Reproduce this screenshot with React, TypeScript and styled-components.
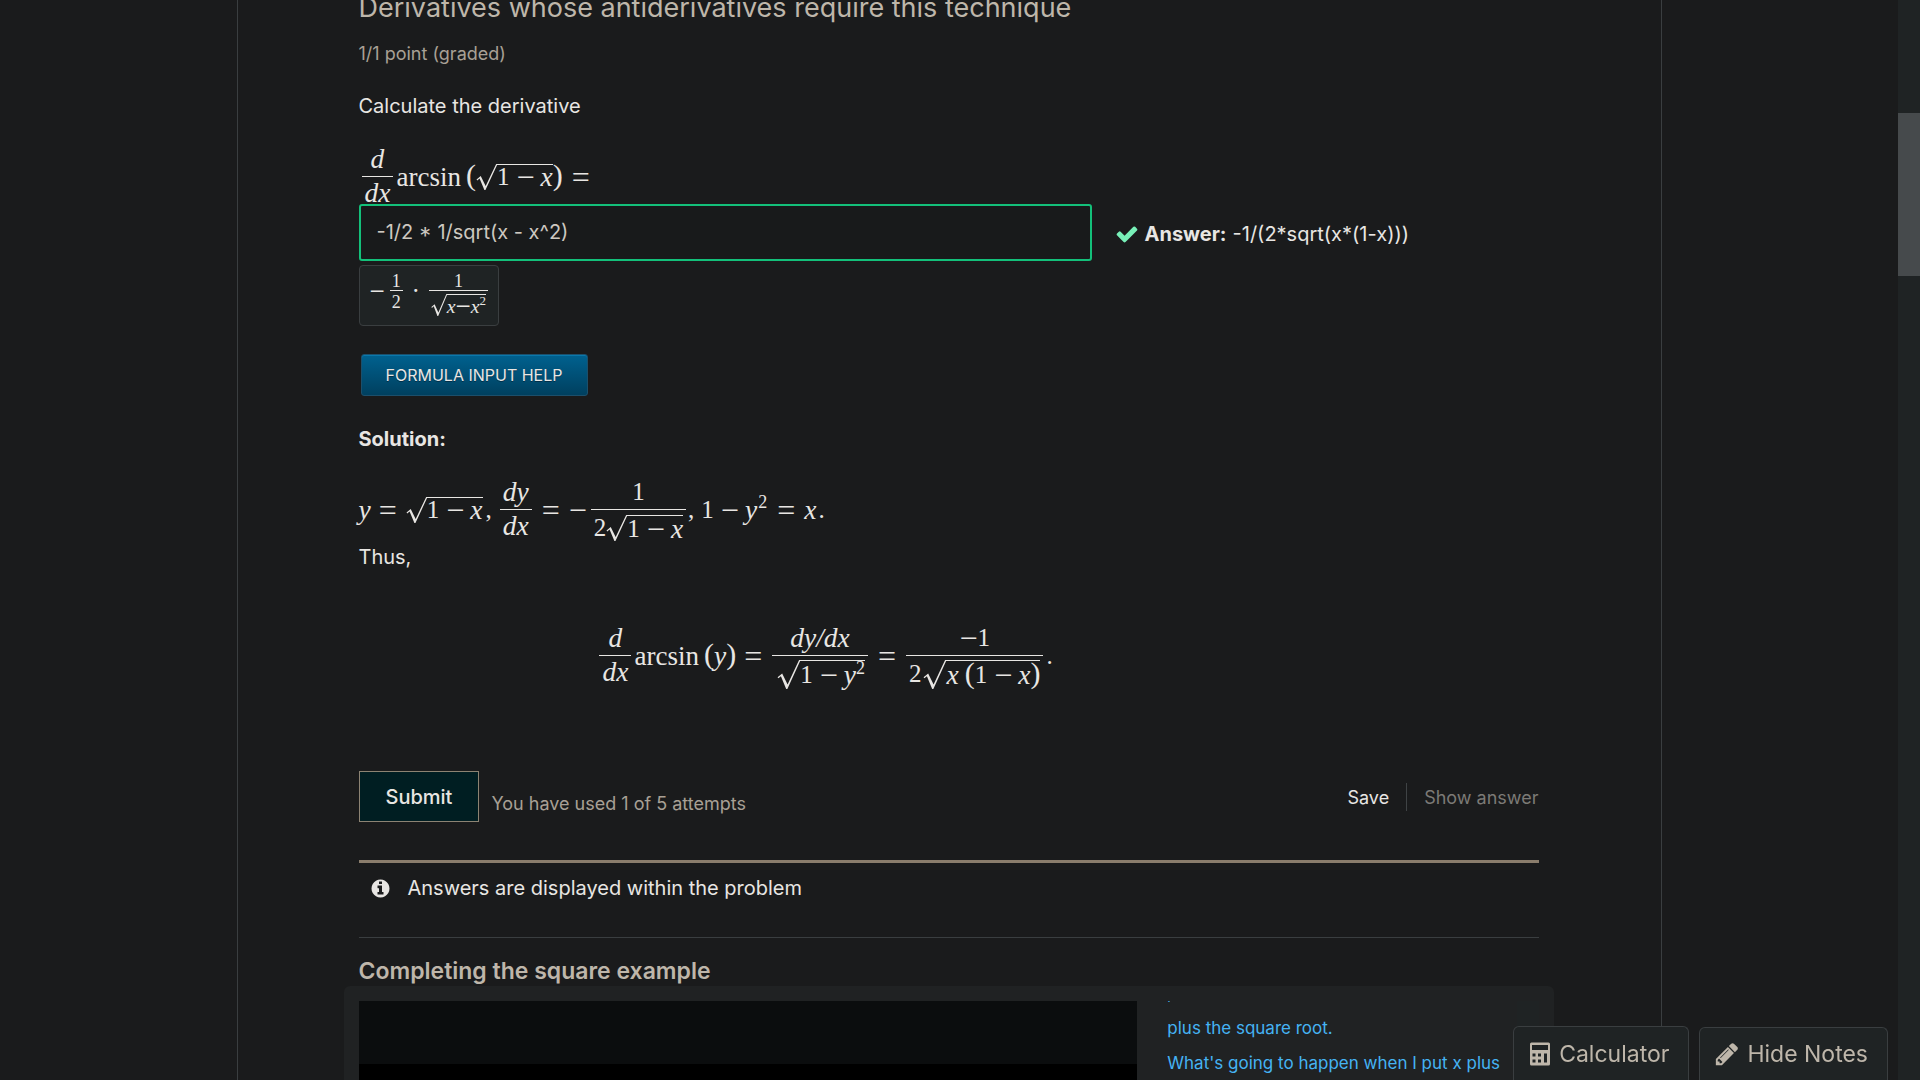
import React from "react";
import styled, { createGlobalStyle, css } from "styled-components";

const GlobalStyle = createGlobalStyle`
  *, *::before, *::after { box-sizing: border-box; }
  html, body { margin: 0; height: 100%; background: #1a1b1c; }
  body {
    overflow: hidden;
    color: #e8e6e3;
    font: 400 20px/30px Inter, "Open Sans", sans-serif;
  }
  h2, h3, p { margin: 0; }
  button, input { font: inherit; color: inherit; }
`;

/* ---------- page frame ---------- */

const Viewport = styled.div`
  display: flex;
  height: 100vh;
  overflow: hidden;
`;

const Scroller = styled.div`
  flex: 1;
  min-width: 0;
  overflow: hidden;
`;

const Track = styled.div`
  flex: none;
  width: 22px;
  padding-top: 113px;
  background: #1f2324;
`;

const Thumb = styled.div`
  height: 163px;
  background: #464a4c;
`;

const Column = styled.main`
  max-width: 1425px;
  min-height: 100%;
  margin: 0 auto;
  padding: 0 122px 0 121px;
  border: solid #3a3e40;
  border-width: 0 1px;
`;

const Problem = styled.section`
  display: flex;
  flex-direction: column;
  margin-top: -8px;
`;

const ProblemTitle = styled.h3`
  color: #beb6aa;
  font-size: 27px;
  font-weight: 400;
  line-height: 32px;
`;

const Progress = styled.p`
  margin-top: 18px;
  color: #a8a095;
  font-size: 18px;
  line-height: 24px;
`;

const Prompt = styled.p`
  margin-top: 25px;
`;

/* ---------- mathematics ---------- */

const Formula = styled.div<{ $small?: boolean }>`
  display: flex;
  align-items: center;
  font-family: "Liberation Serif", serif;
  font-size: ${(p) => (p.$small ? 18 : 25)}px;
  line-height: ${(p) => (p.$small ? 18 : 26)}px;
  white-space: nowrap;
`;

const Row = styled.span`
  display: flex;
  align-items: center;
  justify-content: center;
`;

const Glyph = styled.span<{ $l?: number; $r?: number }>`
  margin-left: ${(p) => p.$l ?? 0}px;
  margin-right: ${(p) => p.$r ?? 0}px;
`;

const Var = styled(Glyph)`
  font-size: 1.1em;
  font-style: italic;
`;

const Fn = styled(Glyph)`
  font-size: 1.08em;
`;

const Op = styled(Glyph)`
  font-size: 1.28em;
`;

const Paren = styled(Glyph)`
  padding-bottom: 4px;
  font-size: 1.2em;
`;

const Dot = styled(Glyph)`
  font-weight: 700;
`;

const Sup = styled.sup<{ $small?: boolean }>`
  padding-bottom: ${(p) => (p.$small ? 10 : 15)}px;
  font-size: ${(p) => (p.$small ? 13 : 18)}px;
  line-height: 1;
`;

const FractionBox = styled.span<{ $l?: number; $r?: number; $small?: boolean; $drop?: boolean }>`
  display: inline-grid;
  grid-template-rows: 1fr 1px 1fr;
  margin-left: ${(p) => p.$l ?? 0}px;
  margin-right: ${(p) => p.$r ?? 0}px;
  & > :first-child {
    align-self: end;
    padding-bottom: ${(p) => (p.$small ? 0 : 4)}px;
  }
  & > :last-child {
    align-self: start;
    padding: ${(p) => (p.$small ? 2 : p.$drop ? 5 : 3)}px ${(p) => (p.$small ? 2 : 3)}px 0;
  }
`;

const Bar = styled.span`
  background: #e8e6e3;
`;

const RootBox = styled.span<{ $tall?: boolean; $small?: boolean; $l?: number }>`
  display: flex;
  margin-left: ${(p) => p.$l ?? 0}px;
  height: ${(p) => (p.$small ? 22 : p.$tall ? 29 : 26)}px;
  ${(p) => (p.$tall || p.$small) && css`margin-top: 1px;`}
`;

const RootSign = styled.svg<{ $small?: boolean; $tall?: boolean }>`
  width: ${(p) => (p.$small ? 16 : p.$tall ? 23 : 21)}px;
  height: 100%;
  overflow: visible;
`;

const Radicand = styled.span`
  display: flex;
  align-items: center;
  border-top: 1px solid #e8e6e3;
`;

type RootProps = { tall?: boolean; small?: boolean; l?: number; children: React.ReactNode };

const Root = ({ tall, small, l, children }: RootProps) => (
  <RootBox $tall={tall} $small={small} $l={l}>
    <RootSign $small={small} $tall={tall} viewBox="0 0 20 26" preserveAspectRatio="none" aria-hidden="true">
      <path d="M0.5 15.5L4.5 12L9.2 22L19.2 0H20.5L9 26H8L3.4 14.6L1.2 16.4Z" fill="#e8e6e3" />
    </RootSign>
    <Radicand>{children}</Radicand>
  </RootBox>
);

type FractionProps = {
  l?: number;
  r?: number;
  small?: boolean;
  drop?: boolean;
  top: React.ReactNode;
  bottom: React.ReactNode;
};

const Fraction = ({ l, r, small, drop, top, bottom }: FractionProps) => (
  <FractionBox $l={l} $r={r} $small={small} $drop={drop}>
    <Row>{top}</Row>
    <Bar />
    <Row>{bottom}</Row>
  </FractionBox>
);

const DdX = () => <Fraction l={3} r={3} top={<Var>d</Var>} bottom={<Var>dx</Var>} />;

const OneMinusX = () => (
  <>
    <Glyph>1</Glyph>
    <Op $l={7} $r={6}>−</Op>
    <Var>x</Var>
  </>
);

const Question = styled(Formula)`
  margin: 25px 0 -3px;
`;

const Derivation = styled(Formula)`
  margin: 24px 0 1px;
`;

const Display = styled(Formula)`
  justify-content: center;
  width: 79%;
  margin-top: 50px;
`;

/* ---------- answer ---------- */

const AnswerRow = styled.div`
  display: flex;
  align-items: center;
  gap: 23px;
`;

const AnswerInput = styled.input`
  width: 733px;
  height: 57px;
  padding: 0 16px 2px;
  border: 2px solid #13c07a;
  border-radius: 3px;
  outline: 0;
  background: #181a1b;
  color: #cdc8c0;
`;

const Status = styled.p`
  display: flex;
  align-items: center;
  gap: 6px;
  padding-top: 2px;
`;

const Icon = styled.svg<{ $size: number }>`
  flex: none;
  width: ${(p) => p.$size}px;
  height: ${(p) => p.$size}px;
  fill: currentColor;
`;

const CheckIcon = styled(Icon)`
  color: #78f0b8;
`;

const Preview = styled(Formula)`
  align-self: flex-start;
  height: 61px;
  margin-top: 4px;
  padding: 0 10px 10px;
  border: 1px solid #3a3e40;
  border-radius: 4px;
  background: #1f2324;
  ${Op} { font-size: 27px; }
`;

const HelpButton = styled.button`
  align-self: flex-start;
  height: 42px;
  margin: 28px 0 0 2px;
  padding: 0 24px;
  border: 1px solid #1c4f6b;
  border-radius: 3px;
  background: linear-gradient(#00618f, #00405f);
  box-shadow: inset 0 1px 0 #0a78ab;
  color: #e8e6e3;
  font-size: 16px;
  line-height: 24px;
  text-shadow: 0 1px 0 #00304a;
  text-transform: uppercase;
`;

const SolutionTitle = styled.p`
  margin-top: 28px;
  font-weight: 700;
`;

/* ---------- actions ---------- */

const Actions = styled.div`
  display: flex;
  align-items: center;
  margin-top: 82px;
`;

const SubmitButton = styled.button`
  height: 51px;
  padding: 0 26px;
  border: 1px solid #8c8373;
  background: #001e22;
  font-weight: 500;
`;

const Attempts = styled.span`
  flex: 1;
  margin-left: 12px;
  padding-top: 14px;
  color: #a8a095;
  font-size: 18px;
  line-height: 24px;
`;

const LinkButton = styled.button`
  height: 28px;
  padding: 2px 17px 0;
  border: 0;
  background: none;
  font-size: 18px;
  line-height: 26px;
  &:disabled { color: #7c7a76; }
  & + & {
    padding-right: 0;
    border-left: 1px solid #3f4345;
  }
`;

const Notice = styled.p`
  display: flex;
  align-items: center;
  gap: 17px;
  margin-top: 38px;
  padding: 10px 11px 34px;
  border-top: 3px solid #8a7d6c;
  border-bottom: 1px solid #3a3e40;
`;

/* ---------- video ---------- */

const VideoTitle = styled.h2`
  margin-top: 19px;
  color: #beb6aa;
  font-size: 23px;
  font-weight: 600;
  line-height: 29px;
`;

const VideoPanel = styled.section`
  display: flex;
  gap: 30px;
  height: 300px;
  margin: 0 -15px;
  padding: 15px 15px 0;
  border-radius: 6px;
  background: #202223;
`;

const Player = styled.div`
  flex: none;
  width: 66%;
  border-top: 63px solid #0b0d0e;
  background: #000;
`;

const Transcript = styled.ol`
  flex: 1;
  display: flex;
  flex-direction: column;
  gap: 11px;
  margin: 0;
  padding: 0;
  overflow: hidden;
  list-style: none;
  white-space: nowrap;
  font-size: 17px;
  line-height: 24px;
  color: #45b3f3;
  & > :first-child { margin-top: -20px; }
`;

const TranscriptTrack = styled.div`
  flex: none;
  width: 22px;
  margin-left: -30px;
  background: #1f2324;
`;

/* ---------- floating tools ---------- */

const Tools = styled.div`
  position: fixed;
  right: 32px;
  bottom: 0;
  display: flex;
  align-items: flex-end;
  gap: 10px;
`;

const ToolButton = styled.button<{ $tall?: boolean }>`
  display: flex;
  align-items: center;
  gap: 7px;
  height: ${(p) => (p.$tall ? 54 : 53)}px;
  padding: 0 19px 0 14px;
  border: 1px solid #3a3e40;
  border-bottom: 0;
  border-radius: 6px 6px 0 0;
  background: #1f2324;
  color: #beb6aa;
  font-size: 23px;
  line-height: 30px;
`;

const captions = [",", "plus the square root.", "What's going to happen when I put x plus"];

export default function App() {
  return (
    <>
      <GlobalStyle />
      <Viewport>
        <Scroller>
          <Column>
            <Problem>
              <ProblemTitle>Derivatives whose antiderivatives require this technique</ProblemTitle>
              <Progress>1/1 point (graded)</Progress>
              <Prompt>Calculate the derivative</Prompt>

              <Question role="math">
                <DdX />
                <Fn $r={5}>arcsin</Fn>
                <Paren>(</Paren>
                <Root><OneMinusX /></Root>
                <Paren $r={9}>)</Paren>
                <Op>=</Op>
              </Question>

              <AnswerRow>
                <AnswerInput aria-label="Your answer" defaultValue="-1/2 * 1/sqrt(x - x^2)" />
                <Status>
                  <CheckIcon $size={24} viewBox="0 0 1792 1792" aria-label="Correct">
                    <path d="M1671 566q0 40-28 68l-724 724-136 136q-28 28-68 28t-68-28l-136-136-362-362q-28-28-28-68t28-68l136-136q28-28 68-28t68 28l294 295 656-657q28-28 68-28t68 28l136 136q28 28 28 68z" />
                  </CheckIcon>
                  <strong>Answer:</strong>
                  <span>-1/(2*sqrt(x*(1-x)))</span>
                </Status>
              </AnswerRow>

              <Preview $small role="math">
                <Op>−</Op>
                <Fraction small l={5} top={<Glyph>1</Glyph>} bottom={<Glyph>2</Glyph>} />
                <Dot $l={10} $r={10}>·</Dot>
                <Fraction
                  small
                  top={<Glyph>1</Glyph>}
                  bottom={
                    <Root small>
                      <Var>x</Var>
                      <Op>−</Op>
                      <Var>x</Var>
                      <Sup $small>2</Sup>
                    </Root>
                  }
                />
              </Preview>

              <HelpButton type="button">Formula input help</HelpButton>

              <SolutionTitle>Solution:</SolutionTitle>

              <Derivation role="math">
                <Var $r={8}>y</Var>
                <Op $r={9}>=</Op>
                <Root><OneMinusX /></Root>
                <Glyph $l={3} $r={6}>,</Glyph>
                <Fraction l={2} r={10} top={<Var>dy</Var>} bottom={<Var>dx</Var>} />
                <Op $r={9}>=</Op>
                <Op>−</Op>
                <Fraction
                  drop
                  l={4}
                  r={2}
                  top={<Glyph>1</Glyph>}
                  bottom={<><Glyph>2</Glyph><Root><OneMinusX /></Root></>}
                />
                <Glyph $r={7}>,</Glyph>
                <Glyph>1</Glyph>
                <Op $l={7} $r={6}>−</Op>
                <Var $r={1}>y</Var>
                <Sup>2</Sup>
                <Op $l={10} $r={9}>=</Op>
                <Var>x</Var>
                <Glyph $l={2}>.</Glyph>
              </Derivation>

              <p>Thus,</p>

              <Display role="math">
                <DdX />
                <Fn $r={5}>arcsin</Fn>
                <Paren>(</Paren>
                <Var>y</Var>
                <Paren $r={8}>)</Paren>
                <Op $r={10}>=</Op>
                <Fraction
                  r={10}
                  top={<Var>dy/dx</Var>}
                  bottom={<Root tall l={2}><Glyph>1</Glyph><Op $l={7} $r={6}>−</Op><Var>y</Var><Sup>2</Sup></Root>}
                />
                <Op $r={10}>=</Op>
                <Fraction
                  r={3}
                  top={<><Op>−</Op><Glyph>1</Glyph></>}
                  bottom={
                    <>
                      <Glyph>2</Glyph>
                      <Root tall l={2}>
                        <Var $r={6}>x</Var>
                        <Paren>(</Paren>
                        <OneMinusX />
                        <Paren>)</Paren>
                      </Root>
                    </>
                  }
                />
                <Glyph>.</Glyph>
              </Display>

              <Actions>
                <SubmitButton type="button">Submit</SubmitButton>
                <Attempts>You have used 1 of 5 attempts</Attempts>
                <LinkButton type="button">Save</LinkButton>
                <LinkButton type="button" disabled>Show answer</LinkButton>
              </Actions>

              <Notice>
                <Icon $size={21} viewBox="0 0 1792 1792" aria-hidden="true">
                  <path d="M1152 1376v-160q0-14-9-23t-23-9h-96v-512q0-14-9-23t-23-9h-320q-14 0-23 9t-9 23v160q0 14 9 23t23 9h96v320h-96q-14 0-23 9t-9 23v160q0 14 9 23t23 9h448q14 0 23-9t9-23zm-128-896v-160q0-14-9-23t-23-9h-192q-14 0-23 9t-9 23v160q0 14 9 23t23 9h192q14 0 23-9t9-23zm640 416q0 209-103 385.500t-279.500 279.500-385.500 103-385.500-103-279.500-279.500-103-385.500 103-385.500 279.500-279.500 385.500-103 385.500 103 279.500 279.500 103 385.500z" />
                </Icon>
                Answers are displayed within the problem
              </Notice>
            </Problem>

            <VideoTitle>Completing the square example</VideoTitle>
            <VideoPanel>
              <Player />
              <Transcript>
                {captions.map((line) => <li key={line}>{line}</li>)}
              </Transcript>
              <TranscriptTrack />
            </VideoPanel>
          </Column>
        </Scroller>
        <Track>
          <Thumb />
        </Track>
      </Viewport>

      <Tools>
        <ToolButton type="button" $tall>
          <Icon $size={24} viewBox="0 0 24 24" aria-hidden="true">
            <path
              fillRule="evenodd"
              d="M3.500 .5h17q1.500 0 1.500 1.500v20q0 1.500-1.500 1.500h-17Q2 23.500 2 22V2Q2 .5 3.500 .5zM4 3v5h16V3zM4.500 11.500v3h3v-3zm5.500 0v3h3v-3zM4.500 17.500v3h3v-3zm5.500 0v3h3v-3zm6 -6v9h3v-9z"
            />
          </Icon>
          Calculator
        </ToolButton>
        <ToolButton type="button">
          <Icon $size={26} viewBox="0 0 1792 1792" aria-hidden="true">
            <path d="M491 1536l91-91-235-235-91 91v107h128v128h107zm523-928q0-22-22-22-10 0-17 7l-542 542q-7 7-7 17 0 22 22 22 10 0 17-7l542-542q7-7 7-17zm-54-192l416 416-832 832h-416v-416zm683 96q0 53-37 90l-166 166-416-416 166-165q36-38 90-38 53 0 91 38l235 234q37 39 37 91z" />
          </Icon>
          Hide Notes
        </ToolButton>
      </Tools>
    </>
  );
}
